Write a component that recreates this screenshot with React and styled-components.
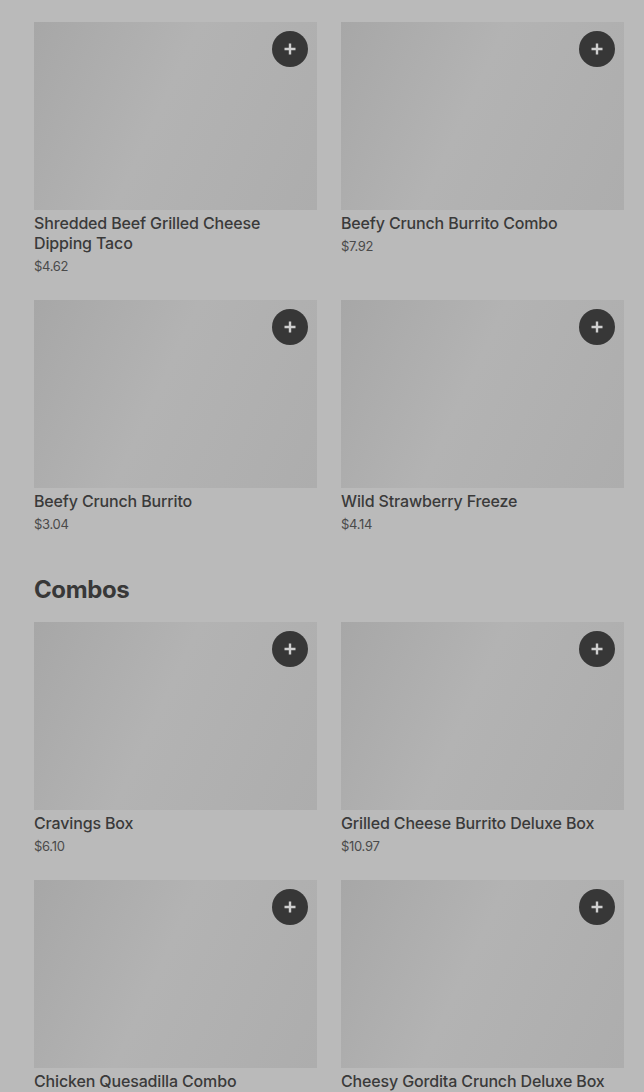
import React from 'react';
import styled, {createGlobalStyle} from 'styled-components';

const GlobalStyle = createGlobalStyle`
  html, body {
    margin: 0;
    padding: 0;
    background: #bababa;
  }
  body {
    font-family: Inter, "Noto Sans", sans-serif;
    color: #3a3a3a;
  }
`;

const Page = styled.div`
  padding: 22px 20px 0 34px;
`;

const Section = styled.section`
  margin-bottom: 40px;
`;

const Heading = styled.h2`
  margin: 0 0 16px;
  font-size: 24px;
  line-height: 32px;
  font-weight: 700;
  color: #383838;
  letter-spacing: -0.4px;
`;

const Grid = styled.div`
  display: grid;
  grid-template-columns: 1fr 1fr;
  column-gap: 24px;
  row-gap: 24px;
`;

const Card = styled.div`
  display: flex;
  flex-direction: column;
`;

const Thumb = styled.div`
  position: relative;
  height: 188px;
  background: linear-gradient(115deg, #a7a7a7 0%, #b3b3b3 45%, #adadad 100%);
`;

const AddButton = styled.button`
  position: absolute;
  top: 9px;
  right: 9px;
  width: 36px;
  height: 36px;
  border-radius: 50%;
  border: none;
  padding: 0;
  background: #373737;
  display: flex;
  align-items: center;
  justify-content: center;
  cursor: pointer;
`;

const Title = styled.div`
  margin-top: 3px;
  font-size: 16px;
  line-height: 20px;
  font-weight: 500;
  letter-spacing: -0.15px;
  color: #3a3a3a;
`;

const Price = styled.div`
  margin-top: 3px;
  font-size: 13px;
  line-height: 20px;
  color: #4a4a4a;
  font-variant-numeric: proportional-nums;
  letter-spacing: -0.3px;
`;

const Plus = () => (
  <svg width="14" height="14" viewBox="0 0 14 14">
    <path d="M7 1.5v11M1.5 7h11" stroke="#cfcfcf" strokeWidth="2.4" />
  </svg>
);

const sections = [
  {
    title: null,
    items: [
      {name: 'Shredded Beef Grilled Cheese Dipping Taco', price: '$4.62'},
      {name: 'Beefy Crunch Burrito Combo', price: '$7.92'},
      {name: 'Beefy Crunch Burrito', price: '$3.04'},
      {name: 'Wild Strawberry Freeze', price: '$4.14'}
    ]
  },
  {
    title: 'Combos',
    items: [
      {name: 'Cravings Box', price: '$6.10'},
      {name: 'Grilled Cheese Burrito Deluxe Box', price: '$10.97'},
      {name: 'Chicken Quesadilla Combo', price: '$8.49'},
      {name: 'Cheesy Gordita Crunch Deluxe Box', price: '$11.25'}
    ]
  }
];

const App = () => (
  <>
    <GlobalStyle />
    <Page>
      {sections.map((s, i) => (
        <Section key={i}>
          {s.title && <Heading>{s.title}</Heading>}
          <Grid>
            {s.items.map(item => (
              <Card key={item.name}>
                <Thumb>
                  <AddButton aria-label="Add">
                    <Plus />
                  </AddButton>
                </Thumb>
                <Title>{item.name}</Title>
                <Price>{item.price}</Price>
              </Card>
            ))}
          </Grid>
        </Section>
      ))}
    </Page>
  </>
);

export default App;
